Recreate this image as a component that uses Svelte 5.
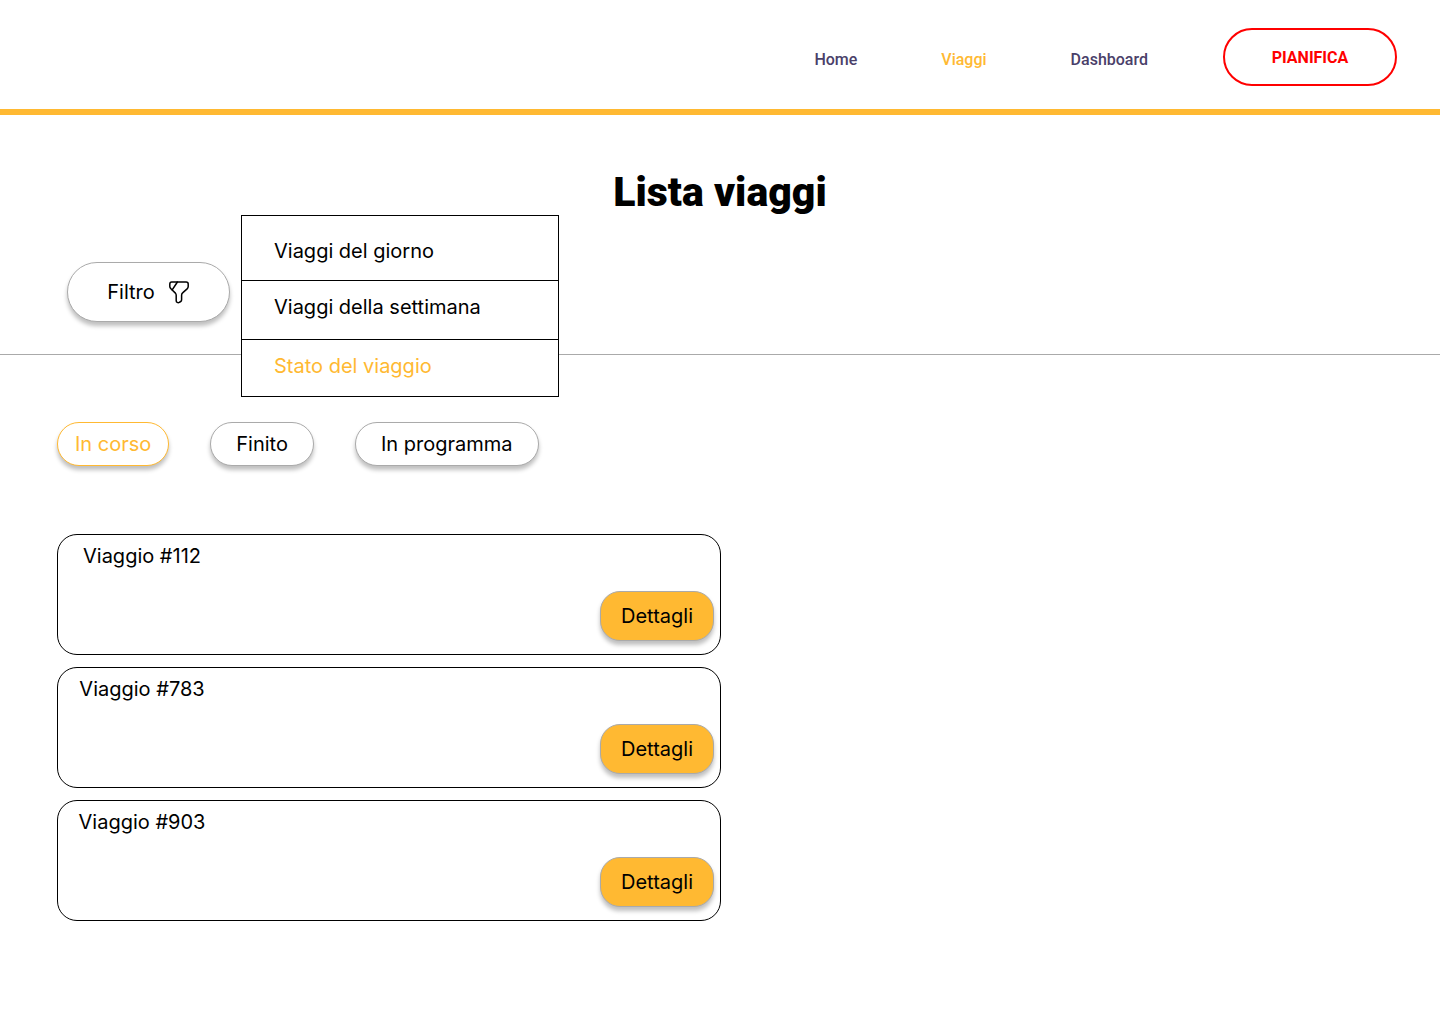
<script>
  const links = ['Home', 'Viaggi', 'Dashboard'];
  const filters = ['Viaggi del giorno', 'Viaggi della settimana', 'Stato del viaggio'];
  const states = ['In corso', 'Finito', 'In programma'];
  const trips = [112, 783, 903];

  let page = $state('Viaggi');
  let filter = $state('Stato del viaggio');
  let status = $state('In corso');
  let open = $state(true);
</script>

<header class="topbar">
  <nav class="nav" aria-label="Principale">
    {#each links as link}
      <a href="#{link.toLowerCase()}" class:active={page === link} onclick={() => (page = link)}>{link}</a>
    {/each}
  </nav>
  <button class="plan" type="button">PIANIFICA</button>
</header>

<main>
  <h1>Lista viaggi</h1>

  <section class="filterbar">
    <div class="dropdown">
      <button class="pill filter" type="button" aria-expanded={open} onclick={() => (open = !open)}>
        Filtro
        <svg width="22" height="24" viewBox="0 0 22 24" fill="none" stroke="#000" stroke-width="1.5" stroke-linecap="round" stroke-linejoin="round" aria-hidden="true">
          <path d="M3.7 2H18.1C19.3 2 20.2 2.9 20.2 4.1V6.4C20.2 7.3 19.7 8.3 19.1 8.9L14.6 12.9C14 13.4 13.6 14.4 13.6 15.3V19.8C13.6 20.4 13.2 21.2 12.7 21.5L11.3 22.4C10 23.2 8.2 22.3 8.2 20.7V15.2C8.2 14.5 7.8 13.6 7.4 13.1L2.9 8.7C2.3 8.2 1.8 7.2 1.8 6.5V4.2C1.8 2.9 2.7 2 3.7 2Z" />
          <path d="M9.4 2L4.2 9.8" />
        </svg>
      </button>
      {#if open}
        <ul class="menu">
          {#each filters as item}
            <li>
              <button type="button" class:active={filter === item} onclick={() => (filter = item)}>{item}</button>
            </li>
          {/each}
        </ul>
      {/if}
    </div>
  </section>

  <div class="states">
    {#each states as item}
      <button class="pill state" class:active={status === item} type="button" onclick={() => (status = item)}>{item}</button>
    {/each}
  </div>

  <div class="content">
    <section class="trips">
      {#each trips as trip}
        <article class="trip">
          <h2>Viaggio #{trip}</h2>
          <button class="pill details" type="button">Dettagli</button>
        </article>
      {/each}
    </section>
  </div>
</main>

<style>
  :global(body) {
    margin: 0;
    background: #fff;
    color: #000;
    font-family: Inter, 'Liberation Sans', sans-serif;
    font-size: 20px;
    line-height: 24px;
  }

  button {
    box-sizing: border-box;
    margin: 0;
    padding: 0;
    background: #fff;
    color: inherit;
    font: inherit;
    cursor: pointer;
  }

  .topbar {
    display: flex;
    flex-wrap: wrap;
    justify-content: flex-end;
    align-items: center;
    gap: 75px;
    padding: 28px 43px 23px;
    border-bottom: 6px solid #ffb932;
    font-family: Roboto, 'Liberation Sans', sans-serif;
    font-size: 16px;
  }

  .nav {
    display: flex;
    gap: 84px;
    padding-top: 6px;
    font-weight: 500;
  }

  .nav a {
    color: #4a4069;
    text-decoration: none;
  }

  .nav a.active {
    color: #ffb932;
  }

  .plan {
    min-width: 174px;
    height: 58px;
    padding-top: 2px;
    border: 2px solid #f00;
    border-radius: 29px;
    color: #f00;
    font-weight: 700;
  }

  h1 {
    margin: 0;
    padding-top: 53px;
    font-family: Roboto, 'Liberation Sans', sans-serif;
    font-size: 41px;
    font-weight: 900;
    line-height: 48px;
    text-align: center;
  }

  .filterbar {
    display: flex;
    padding: 46px 67px 32px;
    border-bottom: 1px solid #aaa;
  }

  .dropdown {
    position: relative;
  }

  .pill {
    border: 1px solid #aaa;
    box-shadow: 0 4px 4px rgba(0, 0, 0, 0.25);
  }

  .filter {
    display: flex;
    align-items: center;
    justify-content: center;
    gap: 13px;
    min-width: 163px;
    height: 60px;
    border-radius: 30px;
  }

  .menu {
    position: absolute;
    z-index: 1;
    top: -47px;
    left: calc(100% + 11px);
    box-sizing: border-box;
    width: 318px;
    margin: 0;
    padding: 0;
    border: 1px solid #000;
    background: #fff;
    list-style: none;
  }

  .menu li + li {
    border-top: 1px solid #000;
  }

  .menu button {
    display: block;
    width: 100%;
    padding: 14px 32px 20px;
    border: 0;
    text-align: left;
  }

  .menu li:first-child button {
    padding: 23px 32px 17px;
  }

  .menu li:last-child button {
    padding-bottom: 18px;
  }

  .menu .active,
  .state.active {
    color: #ffb932;
  }

  .states {
    display: flex;
    flex-wrap: wrap;
    gap: 41px;
    padding: 67px 57px 0;
  }

  .state {
    height: 44px;
    padding: 0 25px;
    border-radius: 22px;
  }

  .state.active {
    padding: 0 17px;
    border-color: #ffb932;
  }

  .content {
    display: grid;
    grid-template-columns: 1fr 1fr;
    padding: 68px 55px 68px 57px;
  }

  .trips {
    display: grid;
    gap: 12px;
  }

  .trip {
    display: flex;
    flex-direction: column;
    justify-content: space-between;
    box-sizing: border-box;
    min-height: 121px;
    padding: 9px 6px 13px 0;
    border: 1px solid #000;
    border-radius: 20px;
  }

  h2 {
    width: 168px;
    margin: 0;
    font-size: 20px;
    font-weight: 400;
    text-align: center;
  }

  .details {
    align-self: flex-end;
    height: 50px;
    min-width: 114px;
    border-radius: 20px;
    background: #ffb932;
  }
</style>
